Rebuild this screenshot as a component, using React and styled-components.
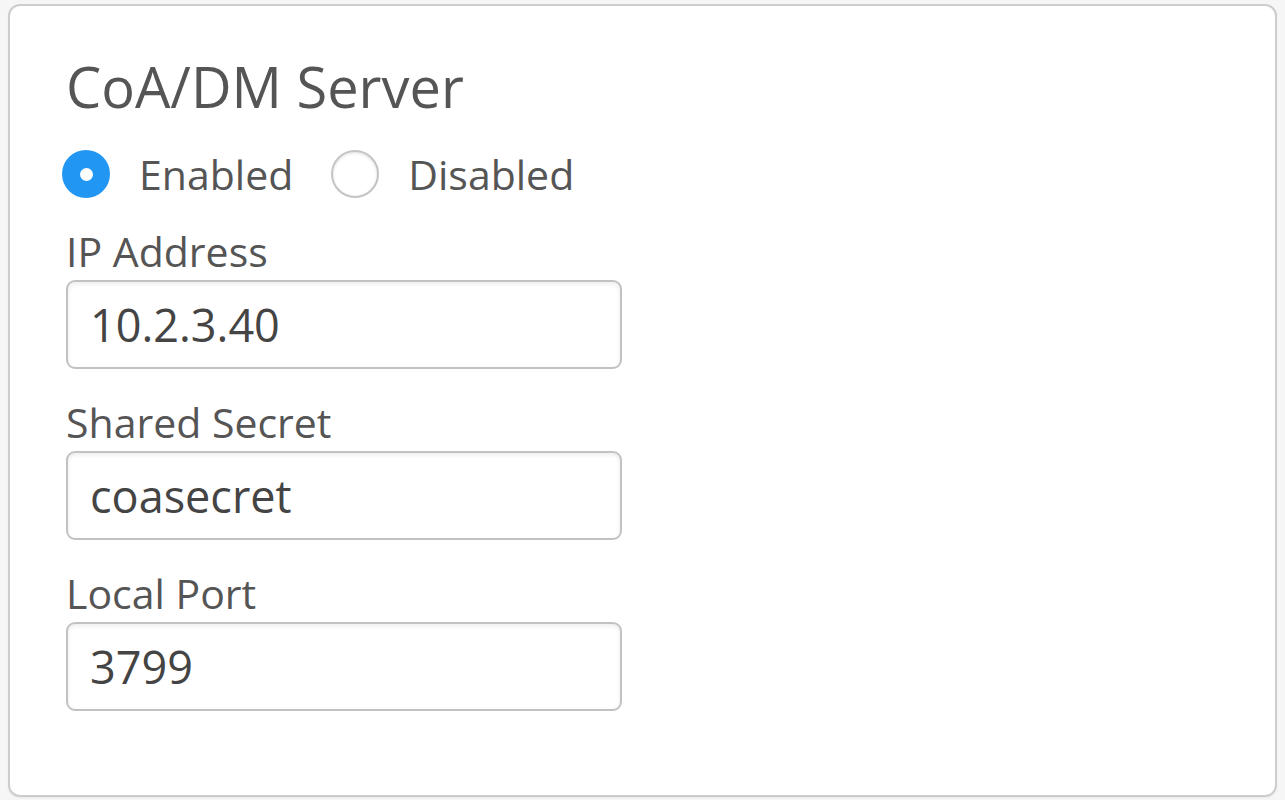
import styled, { createGlobalStyle } from "styled-components";

const GlobalStyle = createGlobalStyle`
	html, body {
		margin: 0;
		padding: 0;
		background: #f6f6f6;
		font-family: "Open Sans", "Liberation Sans", sans-serif;
	}
`;

const Page = styled.div`
	padding: 4px 8px 4px 8px;
`;

const Panel = styled.section`
	background: #fff;
	border: 2px solid #cdcdcd;
	border-radius: 12px;
	padding: 48px 40px 84px 56px;
	box-shadow: 0 1px 2px rgba(0, 0, 0, 0.06);
`;

const Title = styled.h2`
	margin: 0;
	font-size: 56px;
	line-height: 64px;
	font-weight: 400;
	color: #555;
`;

const RadioRow = styled.div`
	display: flex;
	align-items: center;
	height: 50px;
	margin: 31px 0 0 -4px;
`;

const RadioOption = styled.label`
	display: flex;
	align-items: center;
	gap: 29px;
	margin-right: 38px;
	font-size: 41px;
	color: #555;
	cursor: pointer;
`;

const RadioDot = styled.span`
	box-sizing: border-box;
	width: 48px;
	height: 48px;
	border-radius: 50%;
	display: flex;
	align-items: center;
	justify-content: center;
	background: ${(props) => (props.checked ? "#2196f3" : "#fff")};
	border: ${(props) => (props.checked ? "none" : "2px solid #c4c4c4")};
	box-shadow: ${(props) =>
		props.checked ? "none" : "inset 0 1px 3px rgba(0, 0, 0, 0.12)"};

	&::after {
		content: "";
		display: ${(props) => (props.checked ? "block" : "none")};
		width: 13px;
		height: 13px;
		border-radius: 50%;
		background: #fff;
	}
`;

const Field = styled.div`
	margin-top: ${(props) => (props.first ? "27px" : "28px")};
`;

const Label = styled.div`
	font-size: 41px;
	line-height: 50px;
	color: #555;
`;

const TextInput = styled.input`
	box-sizing: border-box;
	display: block;
	width: 556px;
	height: 89px;
	margin-top: 4px;
	padding: 0 22px;
	border: 2px solid #c2c2c2;
	border-radius: 9px;
	background: #fff;
	box-shadow: inset 0 2px 4px rgba(0, 0, 0, 0.08);
	font-family: "Open Sans", "Liberation Sans", sans-serif;
	font-size: 45px;
	color: #444;
	outline: none;
`;

const fields = [
	{ id: "ip", label: "IP Address", value: "10.2.3.40" },
	{ id: "secret", label: "Shared Secret", value: "coasecret" },
	{ id: "port", label: "Local Port", value: "3799" },
];

const App = () => {
	return (
		<Page>
			<GlobalStyle />
			<Panel>
				<Title>CoA/DM Server</Title>
				<RadioRow>
					<RadioOption>
						<RadioDot checked />
						Enabled
					</RadioOption>
					<RadioOption>
						<RadioDot />
						Disabled
					</RadioOption>
				</RadioRow>
				{fields.map((field, i) => (
					<Field key={field.id} first={i === 0}>
						<Label>{field.label}</Label>
						<TextInput type="text" defaultValue={field.value} />
					</Field>
				))}
			</Panel>
		</Page>
	);
};

export default App;
